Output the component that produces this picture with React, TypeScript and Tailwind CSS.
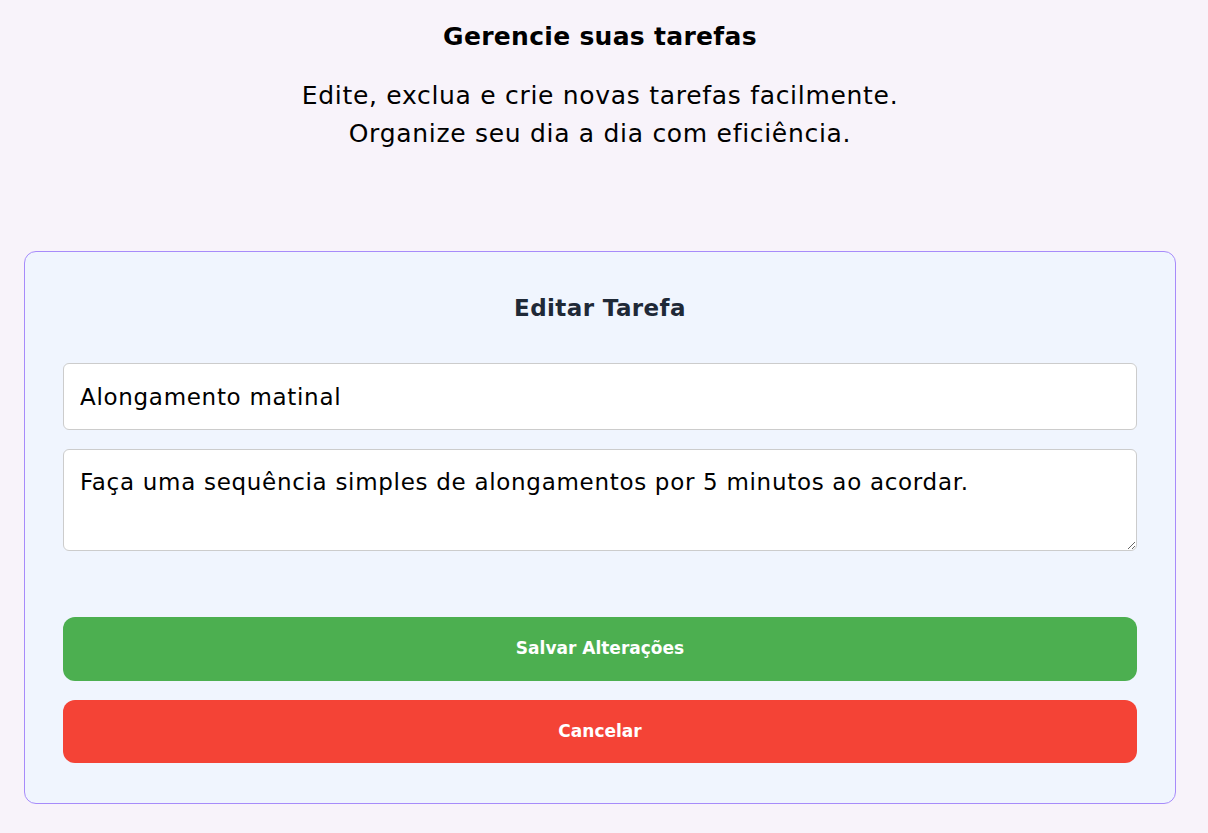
import { useState } from 'react'

const EditTask = () => {
  const [title, setTitle] = useState('Alongamento matinal')
  const [description, setDescription] = useState(
    'Faça uma sequência simples de alongamentos por 5 minutos ao acordar.'
  )

  const onSave = () => {
    console.log('save', title, description)
  }

  const onCancel = () => {
    console.log('cancel')
  }

  return (
    <div className="border border-[#a78bfa] rounded-xl bg-[#f0f5fe] px-[38px] pt-10 pb-10">
      <h2 className="text-center text-[23px] leading-8 font-bold tracking-[0.4px] text-[#1f2937]">
        Editar Tarefa
      </h2>
      <div className="mt-[39px] flex flex-col gap-[19px]">
        <input
          className="h-[67px] w-full bg-white border border-[#ccc] rounded-md px-4 text-[23px] tracking-[0.7px] text-black focus:outline-none"
          value={title}
          onChange={(e) => setTitle(e.target.value)}
        />
        <textarea
          className="h-[102px] w-full bg-white border border-[#ccc] rounded-md px-4 pt-[16px] text-[23px] leading-[32px] tracking-[0.7px] text-black focus:outline-none"
          value={description}
          onChange={(e) => setDescription(e.target.value)}
        />
      </div>
      <div className="mt-[66px] flex flex-col gap-[19px]">
        <button
          onClick={onSave}
          className="h-16 w-full rounded-xl bg-[#4caf50] text-white text-[17px] font-semibold"
        >
          Salvar Alterações
        </button>
        <button
          onClick={onCancel}
          className="h-[63px] w-full rounded-xl bg-[#f44336] text-white text-[17px] font-semibold"
        >
          Cancelar
        </button>
      </div>
    </div>
  )
}

const App = () => {
  return (
    <div className="min-h-screen bg-[#f8f3fa] font-['DejaVu_Sans',sans-serif] text-black">
      <div className="w-[1200px]">
        <div className="pt-[19px] text-center">
          <h1 className="text-[25px] leading-9 font-bold tracking-[0.3px]">Gerencie suas tarefas</h1>
          <p className="mt-[22px] text-[25px] leading-[38px] tracking-[0.7px]">
            Edite, exclua e crie novas tarefas facilmente.
            <br />
            Organize seu dia a dia com eficiência.
          </p>
        </div>
        <div className="px-6 pt-[98px] pb-8">
          <EditTask />
        </div>
      </div>
    </div>
  )
}

export default App
